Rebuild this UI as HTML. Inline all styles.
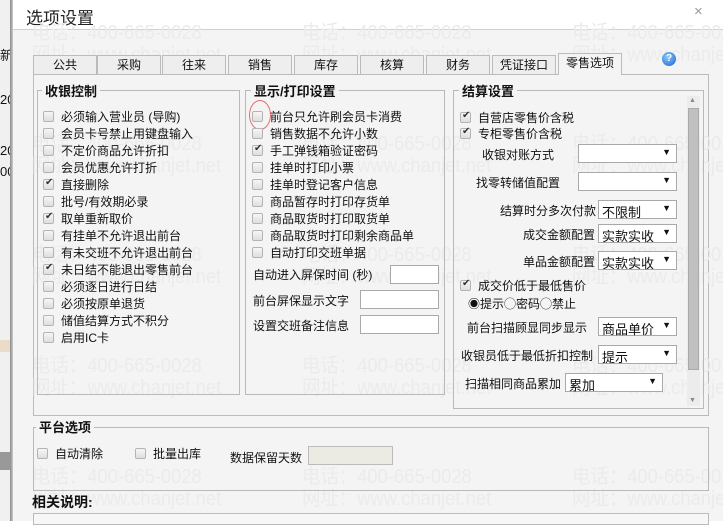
<!DOCTYPE html>
<html><head><meta charset="utf-8"><style>
*{margin:0;padding:0;box-sizing:border-box}
body{width:723px;height:521px;overflow:hidden;background:#fff;position:relative;font-family:"Liberation Sans","Noto Sans CJK SC",sans-serif;font-size:12px;color:#111}
.a{position:absolute;white-space:nowrap}
.wm{position:absolute;color:#ebebeb;font-size:20px;white-space:nowrap;letter-spacing:0px;transform:scaleX(0.92);transform-origin:left}
.cb{position:absolute;width:11px;height:11px;border:1px solid #b4b4b4;border-radius:2px;background:linear-gradient(#f6f6f6,#dedede)}
.cb.c::after{content:"✔";position:absolute;left:1px;top:-3px;font-size:10px;color:#333}
.grp{position:absolute;border:1px solid #b9b9b9}
.gt{position:absolute;background:#f4f4f4;font-weight:bold;font-size:13px;padding:0 3px}
.in{position:absolute;background:#fff;border:1px solid #a9a9a9;height:19px}
.sel::after{content:"▼";position:absolute;right:5px;top:2px;font-size:9px}
.sel span{position:absolute;left:3px;top:1px;font-size:13px}
.tab{position:absolute;top:55px;height:19px;width:64px;border:1px solid #bbb;border-bottom:none;background:#eee;text-align:center;line-height:18px}
</style></head><body>
<div class="a" style="left:0;top:0;width:12px;height:521px;background:#f0f0f0"></div>
<div class="a" style="left:0;top:45px;font-size:13px">新</div>
<div class="a" style="left:0;top:92px;font-size:13px">20</div>
<div class="a" style="left:0;top:143px;font-size:13px">20</div>
<div class="a" style="left:0;top:164px;font-size:13px">00</div>
<div class="a" style="left:0;top:452px;width:12px;height:18px;background:#999"></div>
<div class="a" style="left:0;top:340px;width:12px;height:12px;background:#e9dcc8"></div>
<div class="a" style="left:10px;top:0;width:3px;height:521px;background:linear-gradient(90deg,#888,#ccc)"></div>
<div class="a" style="left:13px;top:0;width:710px;height:521px;background:#f4f4f4"></div>
<div class="a" style="left:13px;top:0;width:710px;height:30px;background:#fff;border-bottom:1px solid #d0d0d0"></div>
<div class="a" style="left:26px;top:4px;font-size:17px;color:#222">选项设置</div>
<div class="a" style="left:694px;top:3px;font-size:15px;color:#999">×</div>
<div class="wm" style="left:32px;top:16px">电话：400-665-0028</div><div class="wm" style="left:302px;top:16px">电话：400-665-0028</div><div class="wm" style="left:572px;top:16px">电话：400-665-0028</div>
<div class="wm" style="left:32px;top:38px">网址：www.chanjet.net</div><div class="wm" style="left:302px;top:38px">网址：www.chanjet.net</div><div class="wm" style="left:572px;top:38px">网址：www.chanjet.net</div>
<div class="tab" style="left:33px">公共</div><div class="tab" style="left:97px">采购</div><div class="tab" style="left:162px">往来</div><div class="tab" style="left:228px">销售</div><div class="tab" style="left:294px">库存</div><div class="tab" style="left:360px">核算</div><div class="tab" style="left:426px">财务</div><div class="tab" style="left:492px">凭证接口</div>
<div class="tab" style="left:558px;top:53px;height:22px;background:#f4f4f4;z-index:2">零售选项</div>
<div class="a" style="left:662px;top:52px;width:14px;height:14px;border-radius:50%;background:radial-gradient(circle at 40% 35%,#8cf,#1a5fd0);color:#fff;font-size:10px;font-weight:bold;text-align:center;line-height:14px">?</div>
<div class="grp" style="left:33px;top:74px;width:676px;height:342px;border-color:#bbb"></div>
<div class="wm" style="left:32px;top:127px">电话：400-665-0028</div><div class="wm" style="left:302px;top:127px">电话：400-665-0028</div><div class="wm" style="left:572px;top:127px">电话：400-665-0028</div>
<div class="wm" style="left:32px;top:149px">网址：www.chanjet.net</div><div class="wm" style="left:302px;top:149px">网址：www.chanjet.net</div><div class="wm" style="left:572px;top:149px">网址：www.chanjet.net</div>
<div class="wm" style="left:32px;top:238px">电话：400-665-0028</div><div class="wm" style="left:302px;top:238px">电话：400-665-0028</div><div class="wm" style="left:572px;top:238px">电话：400-665-0028</div>
<div class="wm" style="left:32px;top:260px">网址：www.chanjet.net</div><div class="wm" style="left:302px;top:260px">网址：www.chanjet.net</div><div class="wm" style="left:572px;top:260px">网址：www.chanjet.net</div>
<div class="wm" style="left:32px;top:349px">电话：400-665-0028</div><div class="wm" style="left:302px;top:349px">电话：400-665-0028</div><div class="wm" style="left:572px;top:349px">电话：400-665-0028</div>
<div class="wm" style="left:32px;top:371px">网址：www.chanjet.net</div><div class="wm" style="left:302px;top:371px">网址：www.chanjet.net</div><div class="wm" style="left:572px;top:371px">网址：www.chanjet.net</div>
<div class="wm" style="left:32px;top:460px">电话：400-665-0028</div><div class="wm" style="left:302px;top:460px">电话：400-665-0028</div><div class="wm" style="left:572px;top:460px">电话：400-665-0028</div>
<div class="wm" style="left:32px;top:482px">网址：www.chanjet.net</div><div class="wm" style="left:302px;top:482px">网址：www.chanjet.net</div><div class="wm" style="left:572px;top:482px">网址：www.chanjet.net</div>
<div class="grp" style="left:37px;top:90px;width:203px;height:305px"></div>
<div class="gt" style="left:42px;top:81px">收银控制</div>
<div class="cb" style="left:43px;top:111px"></div><div class="a" style="left:61px;top:108px">必须输入营业员 (导购)</div>
<div class="cb" style="left:43px;top:128px"></div><div class="a" style="left:61px;top:125px">会员卡号禁止用键盘输入</div>
<div class="cb" style="left:43px;top:145px"></div><div class="a" style="left:61px;top:142px">不定价商品允许折扣</div>
<div class="cb" style="left:43px;top:162px"></div><div class="a" style="left:61px;top:159px">会员优惠允许打折</div>
<div class="cb c" style="left:43px;top:179px"></div><div class="a" style="left:61px;top:176px">直接删除</div>
<div class="cb" style="left:43px;top:196px"></div><div class="a" style="left:61px;top:193px">批号/有效期必录</div>
<div class="cb c" style="left:43px;top:213px"></div><div class="a" style="left:61px;top:210px">取单重新取价</div>
<div class="cb" style="left:43px;top:230px"></div><div class="a" style="left:61px;top:227px">有挂单不允许退出前台</div>
<div class="cb" style="left:43px;top:247px"></div><div class="a" style="left:61px;top:244px">有未交班不允许退出前台</div>
<div class="cb c" style="left:43px;top:264px"></div><div class="a" style="left:61px;top:261px">未日结不能退出零售前台</div>
<div class="cb" style="left:43px;top:281px"></div><div class="a" style="left:61px;top:278px">必须逐日进行日结</div>
<div class="cb" style="left:43px;top:298px"></div><div class="a" style="left:61px;top:295px">必须按原单退货</div>
<div class="cb" style="left:43px;top:315px"></div><div class="a" style="left:61px;top:312px">储值结算方式不积分</div>
<div class="cb" style="left:43px;top:332px"></div><div class="a" style="left:61px;top:329px">启用IC卡</div>
<div class="grp" style="left:245px;top:90px;width:200px;height:305px"></div>
<div class="gt" style="left:251px;top:81px">显示/打印设置</div>
<div class="a" style="left:249px;top:100px;width:22px;height:30px;border:1px solid #e07070;border-radius:50%"></div>
<div class="cb" style="left:252px;top:111px"></div><div class="a" style="left:270px;top:108px">前台只允许刷会员卡消费</div>
<div class="cb" style="left:252px;top:128px"></div><div class="a" style="left:270px;top:125px">销售数据不允许小数</div>
<div class="cb c" style="left:252px;top:145px"></div><div class="a" style="left:270px;top:142px">手工弹钱箱验证密码</div>
<div class="cb" style="left:252px;top:162px"></div><div class="a" style="left:270px;top:159px">挂单时打印小票</div>
<div class="cb" style="left:252px;top:179px"></div><div class="a" style="left:270px;top:176px">挂单时登记客户信息</div>
<div class="cb" style="left:252px;top:196px"></div><div class="a" style="left:270px;top:193px">商品暂存时打印存货单</div>
<div class="cb" style="left:252px;top:213px"></div><div class="a" style="left:270px;top:210px">商品取货时打印取货单</div>
<div class="cb" style="left:252px;top:230px"></div><div class="a" style="left:270px;top:227px">商品取货时打印剩余商品单</div>
<div class="cb" style="left:252px;top:247px"></div><div class="a" style="left:270px;top:244px">自动打印交班单据</div>
<div class="a" style="left:253px;top:266px">自动进入屏保时间 (秒)</div><div class="in" style="left:390px;top:265px;width:49px"></div>
<div class="a" style="left:253px;top:292px">前台屏保显示文字</div><div class="in" style="left:360px;top:290px;width:79px"></div>
<div class="a" style="left:253px;top:317px">设置交班备注信息</div><div class="in" style="left:360px;top:315px;width:79px"></div>
<div class="grp" style="left:453px;top:90px;width:251px;height:319px"></div>
<div class="gt" style="left:459px;top:81px">结算设置</div>
<div class="a" style="left:687px;top:96px;width:13px;height:310px;background:#ececec"></div>
<div class="a" style="left:689px;top:97px;font-size:7px;color:#888">▲</div>
<div class="a" style="left:688px;top:108px;width:11px;height:262px;background:#c0c0c0;border:1px solid #aaa"></div>
<div class="a" style="left:689px;top:397px;font-size:7px;color:#888">▼</div>
<div class="cb c" style="left:460px;top:112px"></div><div class="a" style="left:478px;top:109px">自营店零售价含税</div>
<div class="cb c" style="left:460px;top:128px"></div><div class="a" style="left:478px;top:125px">专柜零售价含税</div>
<div class="a" style="left:482px;top:146px">收银对账方式</div><div class="in sel" style="left:578px;top:144px;width:99px"></div>
<div class="a" style="left:476px;top:174px">找零转储值配置</div><div class="in sel" style="left:578px;top:172px;width:99px"></div>
<div class="a" style="left:500px;top:202px">结算时分多次付款</div><div class="in sel" style="left:598px;top:200px;width:79px"><span>不限制</span></div>
<div class="a" style="left:523px;top:226px">成交金额配置</div><div class="in sel" style="left:598px;top:224px;width:79px"><span>实款实收</span></div>
<div class="a" style="left:523px;top:253px">单品金额配置</div><div class="in sel" style="left:598px;top:251px;width:79px"><span>实款实收</span></div>
<div class="cb c" style="left:460px;top:280px"></div><div class="a" style="left:478px;top:277px">成交价低于最低售价</div>
<div class="a" style="left:468px;top:295px">◉提示◯密码◯禁止</div>
<div class="a" style="left:467px;top:319px">前台扫描顾显同步显示</div><div class="in sel" style="left:598px;top:317px;width:79px"><span>商品单价</span></div>
<div class="a" style="left:461px;top:347px">收银员低于最低折扣控制</div><div class="in sel" style="left:598px;top:345px;width:79px"><span>提示</span></div>
<div class="a" style="left:465px;top:375px">扫描相同商品累加</div><div class="in sel" style="left:565px;top:373px;width:98px"><span>累加</span></div>
<div class="grp" style="left:33px;top:427px;width:676px;height:64px"></div>
<div class="gt" style="left:36px;top:417px">平台选项</div>
<div class="cb" style="left:37px;top:448px"></div><div class="a" style="left:55px;top:445px">自动清除</div>
<div class="cb" style="left:135px;top:448px"></div><div class="a" style="left:153px;top:445px">批量出库</div>
<div class="a" style="left:230px;top:449px">数据保留天数</div>
<div class="a" style="left:308px;top:446px;width:85px;height:19px;background:#ebebe4;border:1px solid #bbb"></div>
<div class="a" style="left:32px;top:492px;font-weight:bold;font-size:14px">相关说明:</div>
<div class="a" style="left:33px;top:513px;width:676px;height:12px;background:#f7f7f7;border:1px solid #bbb"></div>
</body></html>
